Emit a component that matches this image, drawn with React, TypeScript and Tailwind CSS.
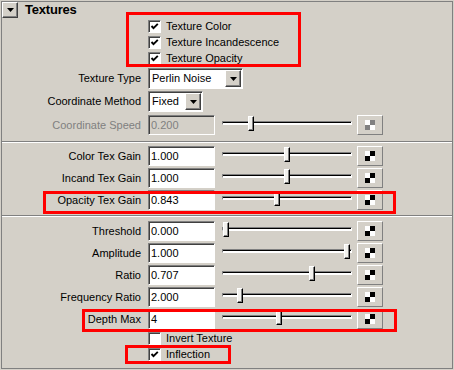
import React from 'react';

type SliderRowData = { label: string; value: string; pos: number };

const gainRows: SliderRowData[] = [
    { label: 'Color Tex Gain', value: '1.000', pos: 62 },
    { label: 'Incand Tex Gain', value: '1.000', pos: 62 },
    { label: 'Opacity Tex Gain', value: '0.843', pos: 52 },
];

const noiseRows: SliderRowData[] = [
    { label: 'Threshold', value: '0.000', pos: 1 },
    { label: 'Amplitude', value: '1.000', pos: 122 },
    { label: 'Ratio', value: '0.707', pos: 87 },
    { label: 'Frequency Ratio', value: '2.000', pos: 15 },
    { label: 'Depth Max', value: '4', pos: 54 },
];

function DownArrow() {
    return (
        <svg width="7" height="4" viewBox="0 0 7 4">
            <polygon points="0,0 7,0 3.5,4" fill="#000" />
        </svg>
    );
}

function Checkbox({ label, checked }: { label: string; checked: boolean }) {
    return (
        <div className="flex h-[16px] items-center">
            <div className="w-[146px]" />
            <div className="flex h-[13px] w-[13px] items-center justify-center border border-t-[#808080] border-l-[#808080] border-r-white border-b-white bg-white shadow-[inset_1px_1px_0_#404040]">
                {checked && (
                    <svg width="9" height="9" viewBox="0 0 9 9">
                        <path d="M1.5 4 L3.5 6.2 L7.8 1.8" stroke="#000" strokeWidth="1.9" fill="none" />
                    </svg>
                )}
            </div>
            <span className="ml-[5px]">{label}</span>
        </div>
    );
}

function Dropdown({ value, width }: { value: string; width: string }) {
    return (
        <div className={`flex h-[21px] items-center border border-t-[#808080] border-l-[#808080] border-r-white border-b-white bg-white shadow-[inset_1px_1px_0_#404040] ${width}`}>
            <span className="flex-1 pl-[3px]">{value}</span>
            <div className="mr-[1px] flex h-[17px] w-[16px] items-center justify-center border border-t-white border-l-white border-r-[#404040] border-b-[#404040] bg-[#d4d0c8] shadow-[inset_-1px_-1px_0_#808080]">
                <DownArrow />
            </div>
        </div>
    );
}

function Swatch({ disabled }: { disabled?: boolean }) {
    const dark = disabled ? 'bg-[#808080]' : 'bg-black';
    return (
        <div className="ml-[5px] flex h-[20px] w-[26px] items-center justify-center border border-t-white border-l-white border-r-[#808080] border-b-[#808080]">
            <div className="grid h-[10px] w-[10px] grid-cols-2 grid-rows-2">
                <div className="bg-white" />
                <div className={dark} />
                <div className={dark} />
                <div className="bg-white" />
            </div>
        </div>
    );
}

function Slider({ pos }: { pos: number }) {
    return (
        <div className="relative ml-[7px] h-[22px] w-[130px] pt-[7px]">
            <div className="h-[4px] border border-t-[#808080] border-l-[#808080] border-r-white border-b-white">
                <div className="h-[2px] border-t border-black bg-white" />
            </div>
            {/* thumb */}
            <div
                className="absolute top-[2px] h-[15px] w-[6px] border border-t-white border-l-white border-r-black border-b-black bg-[#f2f1ed] shadow-[inset_-1px_-1px_0_#808080]"
                style={{ left: pos }}
            />
        </div>
    );
}

function SliderRow({ label, value, pos, disabled }: SliderRowData & { disabled?: boolean }) {
    return (
        <div className="flex h-[22px] items-center">
            <div className={`w-[139px] text-right ${disabled ? 'text-[#808080]' : 'text-black'}`}>{label}</div>
            <div
                className={`ml-[7px] flex h-[20px] w-[67px] items-center border border-t-[#808080] border-l-[#808080] border-r-white border-b-white pl-[2px] shadow-[inset_1px_1px_0_#404040] ${
                    disabled ? 'bg-[#d4d0c8] text-[#808080]' : 'bg-white text-black'
                }`}
            >
                {value}
            </div>
            <Slider pos={pos} />
            <Swatch disabled={disabled} />
        </div>
    );
}

function Separator() {
    return <div className="h-[2px] border-t border-t-[#808080] border-b border-b-white" />;
}

export default function App() {
    return (
        <div className="relative h-[370px] w-[454px] overflow-hidden bg-[#d4d0c8] p-[1px] font-['Liberation_Sans',Arial,sans-serif] text-[11px] text-black">
            <div className="h-[368px] border border-[#808080]">
                {/* Header */}
                <div className="flex h-[16px] items-center">
                    <div className="flex h-[16px] w-[16px] items-center justify-center border border-t-white border-l-white border-r-[#404040] border-b-[#404040] shadow-[inset_-1px_-1px_0_#808080]">
                        <DownArrow />
                    </div>
                    <span className="ml-[7px] text-[13px] font-bold tracking-[-0.2px]">Textures</span>
                </div>

                {/* Texture toggles */}
                <Checkbox label="Texture Color" checked />
                <Checkbox label="Texture Incandescence" checked />
                <Checkbox label="Texture Opacity" checked />

                <div className="mt-[1px] flex h-[23px] items-center">
                    <div className="w-[139px] text-right">Texture Type</div>
                    <div className="ml-[7px]">
                        <Dropdown value="Perlin Noise" width="w-[95px]" />
                    </div>
                </div>
                <div className="flex h-[23px] items-center">
                    <div className="w-[139px] text-right">Coordinate Method</div>
                    <div className="ml-[7px]">
                        <Dropdown value="Fixed" width="w-[55px]" />
                    </div>
                </div>
                <div className="h-[23px] pt-[1px]">
                    <SliderRow label="Coordinate Speed" value="0.200" pos={26} disabled />
                </div>

                <div className="mt-[5px]">
                    <Separator />
                </div>

                {/* Gains */}
                <div className="mt-[2px]">
                    {gainRows.map((r) => (
                        <SliderRow key={r.label} {...r} />
                    ))}
                </div>

                <div className="mt-[4px]">
                    <Separator />
                </div>

                {/* Noise params */}
                <div className="mt-[3px]">
                    {noiseRows.map((r) => (
                        <SliderRow key={r.label} {...r} />
                    ))}
                </div>

                <Checkbox label="Invert Texture" checked={false} />
                <Checkbox label="Inflection" checked />
            </div>

            {/* Red annotation boxes */}
            <div className="absolute left-[126px] top-[12px] h-[55px] w-[175px] border-[3px] border-[#ff0000]" />
            <div className="absolute left-[43px] top-[191px] h-[23px] w-[353px] border-[3px] border-[#ff0000]" />
            <div className="absolute left-[82px] top-[309px] h-[23px] w-[315px] border-[3px] border-[#ff0000]" />
            <div className="absolute left-[125px] top-[345px] h-[19px] w-[106px] border-[3px] border-[#ff0000]" />
        </div>
    );
}
